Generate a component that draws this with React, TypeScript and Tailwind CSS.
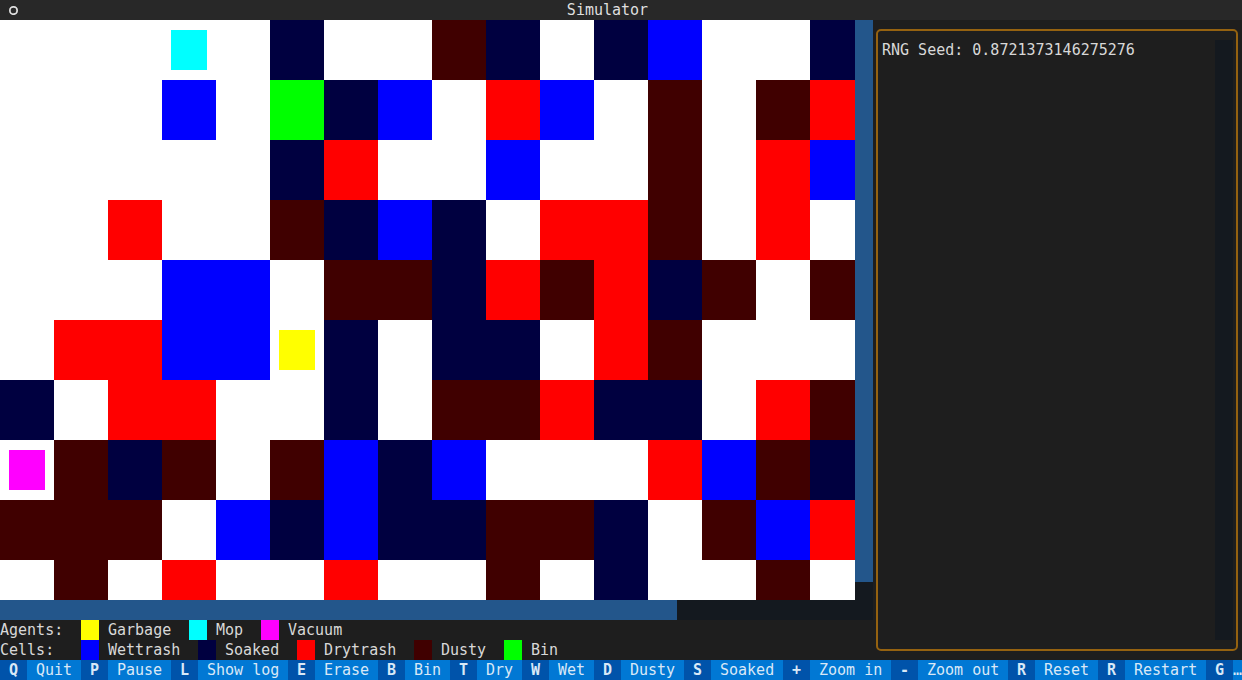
import React from "react";

const CHAR = 9;

const cellColors: Record<string, string> = {
  ".": "bg-white",
  W: "bg-[#0000ff]",
  S: "bg-[#000040]",
  D: "bg-[#ff0000]",
  U: "bg-[#400000]",
  B: "bg-[#00ff00]",
};

const board = [
  ".....S..US.SW..S",
  "...W.BSW.DW.U.UD",
  ".....SD..W..U.DW",
  "..D..USWS.DDU.D.",
  "...WW.UUSDUDSU.U",
  ".DDWW.S.SS.DU...",
  "S.DD..S.UUDSS.DU",
  ".USU.UWSW...DWUS",
  "UUU.WSWSSUUS.UWD",
  ".U.D..D..U.S..U.",
];

const agentAt: Record<string, string> = {
  "0,3": "bg-[#00ffff]",
  "5,5": "bg-[#ffff00]",
  "7,0": "bg-[#ff00ff]",
};

const agents = [
  ["Garbage", "bg-[#ffff00]"],
  ["Mop", "bg-[#00ffff]"],
  ["Vacuum", "bg-[#ff00ff]"],
];

const cells = [
  ["Wettrash", cellColors.W],
  ["Soaked", cellColors.S],
  ["Drytrash", cellColors.D],
  ["Dusty", cellColors.U],
  ["Bin", cellColors.B],
];

const bindings = [
  ["Q", "Quit"],
  ["P", "Pause"],
  ["L", "Show log"],
  ["E", "Erase"],
  ["B", "Bin"],
  ["T", "Dry"],
  ["W", "Wet"],
  ["D", "Dusty"],
  ["S", "Soaked"],
  ["+", "Zoom in"],
  ["-", "Zoom out"],
  ["R", "Reset"],
  ["R", "Restart"],
  ["G", "…"],
];

function Board() {
  return (
    <div className="min-h-0 min-w-0 flex-1 overflow-hidden bg-white">
      {board.map((row, y) => (
        <div key={y} className="flex">
          {row.split("").map((c, x) => (
            <div
              key={x}
              className={`flex h-[60px] w-[54px] shrink-0 items-center justify-center ${cellColors[c]}`}
            >
              {agentAt[`${y},${x}`] && (
                <div className={`h-10 w-9 ${agentAt[`${y},${x}`]}`} />
              )}
            </div>
          ))}
        </div>
      ))}
    </div>
  );
}

function LegendRow({ title, items }: { title: string; items: string[][] }) {
  return (
    <div className="flex h-5 shrink-0 whitespace-pre">
      <span className="w-[81px] shrink-0">{title}</span>
      <ul className="flex gap-[18px]">
        {items.map(([name, color]) => (
          <li key={name} className="flex gap-[9px]">
            <span className={`w-[18px] ${color}`} />
            <span style={{ width: name.length * CHAR }}>{name}</span>
          </li>
        ))}
      </ul>
    </div>
  );
}

export default function App() {
  return (
    <div className="flex h-screen flex-col overflow-hidden bg-[#1e1e1e] font-['DejaVu_Sans_Mono',monospace] text-[15px] leading-5 text-[#d8d8d8]">
      <header className="flex h-5 shrink-0 bg-[#282828] text-[#dfdfdf]">
        <button aria-label="Menu" className="flex h-5 w-[27px] shrink-0 items-center justify-center">
          <svg viewBox="0 0 9 10" className="h-[10px] w-[9px]" fill="none" stroke="currentColor" strokeWidth="1.7">
            <rect x="0.9" y="1.8" width="7.2" height="7.4" rx="3.3" />
          </svg>
        </button>
        <h1 className="flex-1 pr-[54px] text-center">Simulator</h1>
      </header>

      <main className="flex min-h-0 flex-1">
        <section className="flex min-w-0 flex-1 flex-col">
          <div className="flex min-h-0 flex-1">
            <Board />
            <div className="flex w-[18px] shrink-0 flex-col bg-[#14191f]">
              <div className="flex-[562] bg-[#23568b]" />
              <div className="flex-[18]" />
            </div>
          </div>
          <div className="flex h-5 shrink-0 bg-[#14191f] pr-[18px]">
            <div className="flex-[677] bg-[#23568b]" />
            <div className="flex-[178]" />
          </div>
          <LegendRow title="Agents:" items={agents} />
          <LegendRow title="Cells:" items={cells} />
        </section>

        <aside className="flex w-[369px] shrink-0 pt-[9px] pr-1 pb-[9px] pl-[3px]">
          <div className="flex min-w-0 flex-1 rounded-[5px] border-2 border-[#956210] py-[9px] pr-[3px] pl-1">
            <p className="min-w-0 flex-1">RNG Seed: 0.8721373146275276</p>
            <div className="w-[18px] shrink-0 bg-[#14191f]" />
          </div>
        </aside>
      </main>

      <footer className="flex h-5 shrink-0 overflow-hidden bg-[#0178d4] text-[#d9e8f7]">
        {bindings.map(([key, label], i) => (
          <button key={i} className="flex shrink-0 whitespace-pre">
            <kbd className="w-[27px] bg-[#0053aa] text-center font-['DejaVu_Sans_Mono',monospace] text-[15px] font-bold">
              {key}
            </kbd>
            <span
              className={label === "…" ? "" : "px-[9px]"}
              style={{ width: (label.length + (label === "…" ? 0 : 2)) * CHAR }}
            >
              {label}
            </span>
          </button>
        ))}
      </footer>
    </div>
  );
}
